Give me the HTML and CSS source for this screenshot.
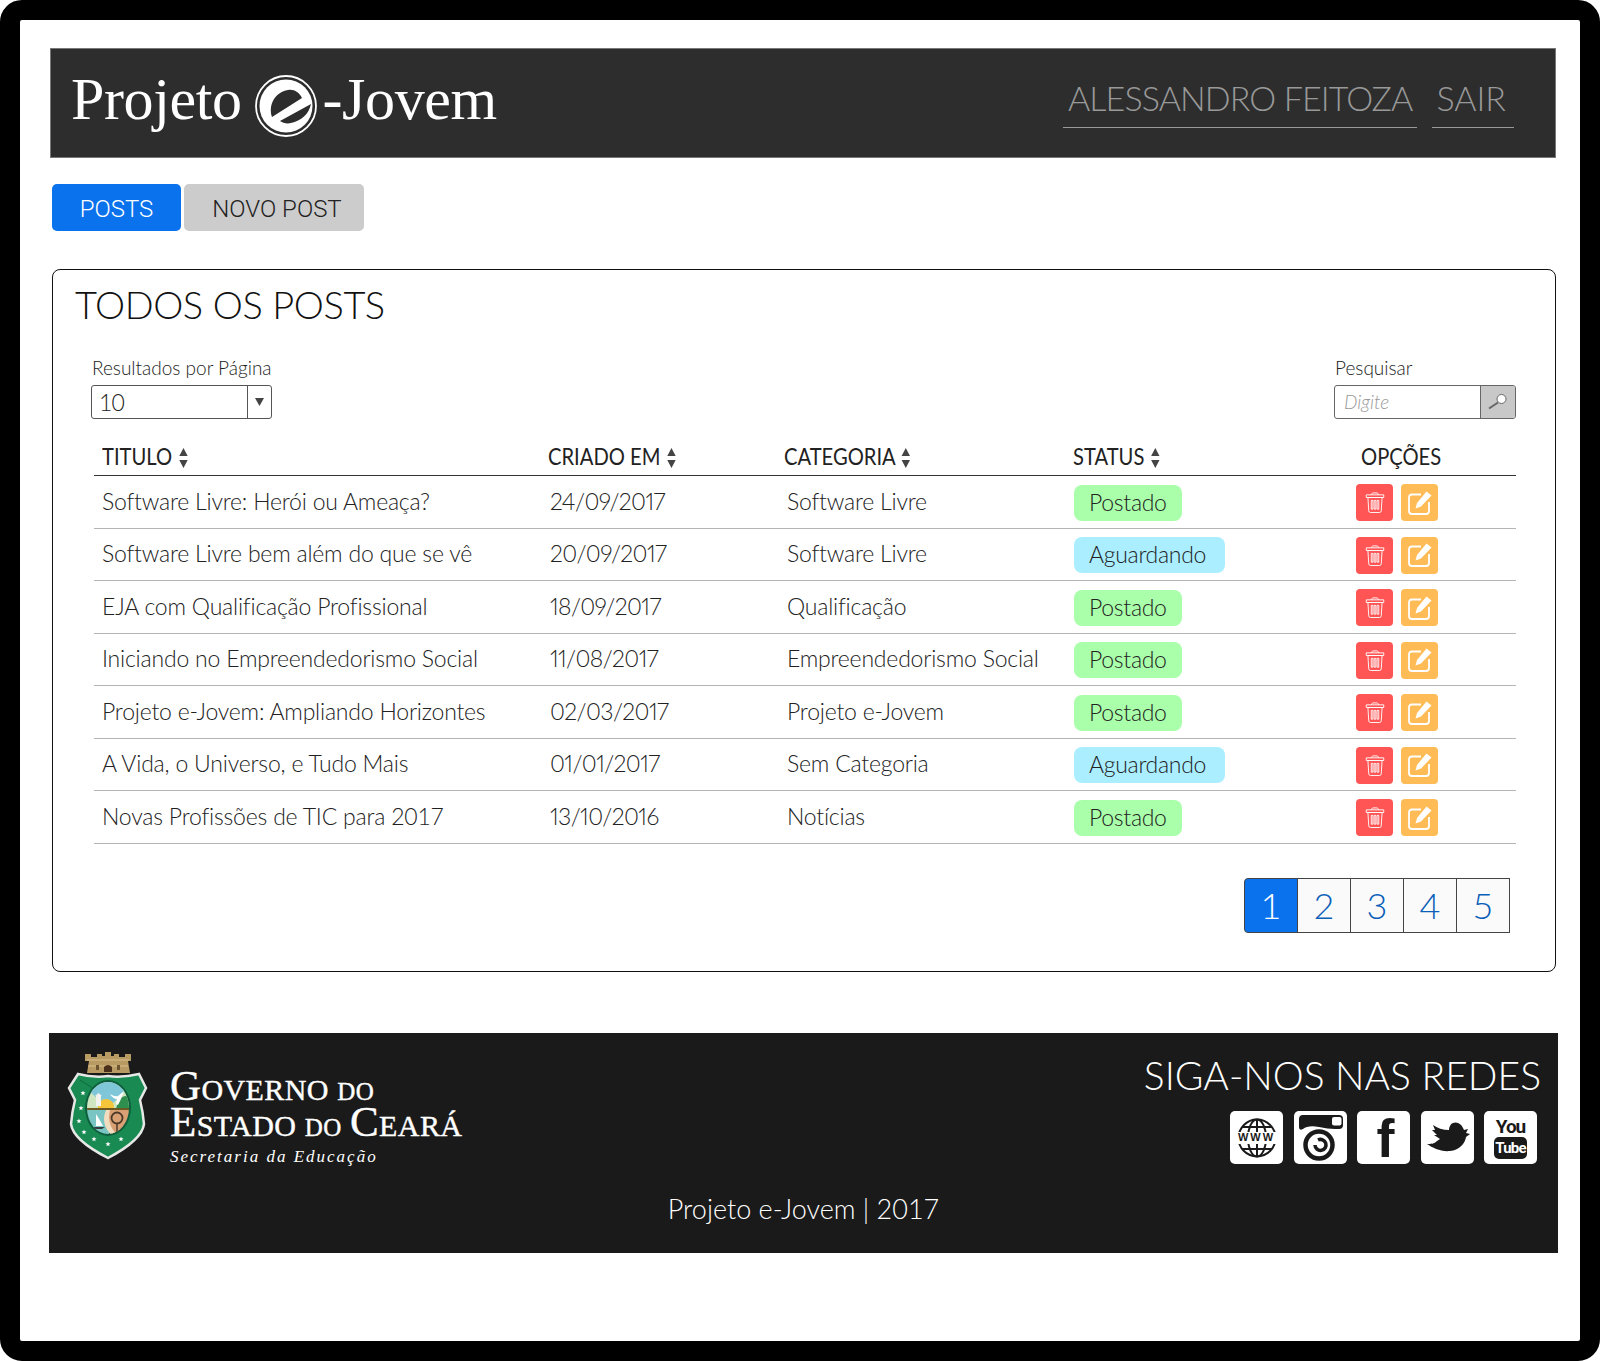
FILE: index.html
```html
<!DOCTYPE html>
<html lang="pt-BR">
<head>
<meta charset="utf-8">
<title>Projeto e-Jovem</title>
<link rel="stylesheet" href="styles.css">
</head>
<body>
<svg class="defs" width="0" height="0" aria-hidden="true">
  <defs>
    <symbol id="sort" viewBox="0 0 10 20"><path d="M5 0 10 8H0ZM5 20 0 12H10Z"/></symbol>
    <symbol id="trash" viewBox="0 0 24 26"><g fill="none" stroke="#fff" stroke-width="1.1"><path d="M7.500 3.800 8.500 2.200Q8.800 1.500 9.500 1.500h5Q15.200 1.500 15.500 2.200L16.500 3.800"/><path d="M1.500 3.800H22.500V7H1.500Z"/><path d="M3.500 7 4.500 23Q4.700 25 6.500 25H17.500Q19.300 25 19.500 23L20.500 7Z"/><path d="M7.500 10.500h2v10.500h-2zM11 10.500h2v10.500h-2zM14.500 10.500h2v10.500h-2z"/></g></symbol>
    <symbol id="edit" viewBox="0 0 24 24"><path d="M13 3.500H4Q1 3.500 1 6.500V20Q1 23 4 23H18Q21 23 21 20V11" fill="none" stroke="#fff" stroke-width="1.800"/><path d="M18.500 .5 23.500 4.500 13 15.500 7.500 17.500 9 12Z" fill="#fff"/></symbol>
    <polygon id="star" points="0,-2.600 .7,-.8 2.600,-.8 1.100,.4 1.600,2.300 0,1.200 -1.600,2.300 -1.100,.4 -2.600,-.8 -.7,-.8" fill="#fff"/>
  </defs>
</svg>
<div class="frame">
  <header class="topbar">
    <div class="logo">
      <span>Projeto</span>
      <svg class="logo-mark" viewBox="0 0 62 62" aria-hidden="true">
        <circle cx="31" cy="31" r="30" fill="none" stroke="#fff" stroke-width="1.800"/>
        <circle cx="31" cy="31" r="26.500" fill="#fff"/>
        <path d="M17 42C13 30 20 17 33 15C39 14 44 17 47 23Z" fill="#2d2d2d"/>
        <path d="M25 46 56 29C54 39 46 46 36 48C32 49 28 48 25 46Z" fill="#2d2d2d"/>
      </svg>
      <span>-Jovem</span>
    </div>
    <nav class="usernav">
      <a class="usernav-name">ALESSANDRO FEITOZA</a>
      <a class="usernav-exit">SAIR</a>
    </nav>
  </header>

  <div class="tabs">
    <a class="tab tab-active">POSTS</a>
    <a class="tab tab-new">NOVO POST</a>
  </div>

  <main class="panel">
    <h1 class="panel-title">TODOS OS POSTS</h1>
    <div class="controls">
      <div class="control">
        <div class="control-label">Resultados por Página</div>
        <div class="select">
          <span class="select-value">10</span>
          <span class="select-arrow"><svg width="9" height="8" viewBox="0 0 9 8"><path d="M0 0H9L4.500 8Z" fill="#444"/></svg></span>
        </div>
      </div>
      <div class="control">
        <div class="control-label">Pesquisar</div>
        <div class="search">
          <span class="search-input">Digite</span>
          <span class="search-btn">
            <svg width="20" height="16" viewBox="0 0 20 16"><path d="M1 14.500 10 8.500" stroke="#666" stroke-width="2"/><circle cx="13.500" cy="5" r="4.500" fill="#fff" stroke="#666" stroke-width="1"/></svg>
          </span>
        </div>
      </div>
    </div>

    <div class="table">
      <div class="row row-head">
        <div class="th">TITULO <svg class="sort"><use href="#sort"/></svg></div>
        <div class="th">CRIADO EM <svg class="sort"><use href="#sort"/></svg></div>
        <div class="th">CATEGORIA <svg class="sort"><use href="#sort"/></svg></div>
        <div class="th">STATUS <svg class="sort"><use href="#sort"/></svg></div>
        <div class="th th-options">OPÇÕES</div>
      </div>
      <div class="row">
        <div class="td">Software Livre: Herói ou Ameaça?</div><div class="td td-date">24/09/2017</div><div class="td td-cat">Software Livre</div>
        <div class="td td-status"><span class="pill pill-ok">Postado</span></div>
        <div class="td td-actions"><a class="act act-del"><svg class="ico-del"><use href="#trash"/></svg></a><a class="act act-edit"><svg class="ico-edit"><use href="#edit"/></svg></a></div>
      </div>
      <div class="row">
        <div class="td">Software Livre bem além do que se vê</div><div class="td td-date">20/09/2017</div><div class="td td-cat">Software Livre</div>
        <div class="td td-status"><span class="pill pill-wait">Aguardando</span></div>
        <div class="td td-actions"><a class="act act-del"><svg class="ico-del"><use href="#trash"/></svg></a><a class="act act-edit"><svg class="ico-edit"><use href="#edit"/></svg></a></div>
      </div>
      <div class="row">
        <div class="td">EJA com Qualificação Profissional</div><div class="td td-date">18/09/2017</div><div class="td td-cat">Qualificação</div>
        <div class="td td-status"><span class="pill pill-ok">Postado</span></div>
        <div class="td td-actions"><a class="act act-del"><svg class="ico-del"><use href="#trash"/></svg></a><a class="act act-edit"><svg class="ico-edit"><use href="#edit"/></svg></a></div>
      </div>
      <div class="row">
        <div class="td">Iniciando no Empreendedorismo Social</div><div class="td td-date">11/08/2017</div><div class="td td-cat">Empreendedorismo Social</div>
        <div class="td td-status"><span class="pill pill-ok">Postado</span></div>
        <div class="td td-actions"><a class="act act-del"><svg class="ico-del"><use href="#trash"/></svg></a><a class="act act-edit"><svg class="ico-edit"><use href="#edit"/></svg></a></div>
      </div>
      <div class="row">
        <div class="td">Projeto e-Jovem: Ampliando Horizontes</div><div class="td td-date">02/03/2017</div><div class="td td-cat">Projeto e-Jovem</div>
        <div class="td td-status"><span class="pill pill-ok">Postado</span></div>
        <div class="td td-actions"><a class="act act-del"><svg class="ico-del"><use href="#trash"/></svg></a><a class="act act-edit"><svg class="ico-edit"><use href="#edit"/></svg></a></div>
      </div>
      <div class="row">
        <div class="td">A Vida, o Universo, e Tudo Mais</div><div class="td td-date">01/01/2017</div><div class="td td-cat">Sem Categoria</div>
        <div class="td td-status"><span class="pill pill-wait">Aguardando</span></div>
        <div class="td td-actions"><a class="act act-del"><svg class="ico-del"><use href="#trash"/></svg></a><a class="act act-edit"><svg class="ico-edit"><use href="#edit"/></svg></a></div>
      </div>
      <div class="row">
        <div class="td">Novas Profissões de TIC para 2017</div><div class="td td-date">13/10/2016</div><div class="td td-cat">Notícias</div>
        <div class="td td-status"><span class="pill pill-ok">Postado</span></div>
        <div class="td td-actions"><a class="act act-del"><svg class="ico-del"><use href="#trash"/></svg></a><a class="act act-edit"><svg class="ico-edit"><use href="#edit"/></svg></a></div>
      </div>
    </div>

    <div class="pager">
      <a class="page page-active">1</a><a class="page">2</a><a class="page">3</a><a class="page">4</a><a class="page">5</a>
    </div>
  </main>

  <footer class="footer">
    <div class="footer-top">
      <div class="brand">
        <svg class="arms" viewBox="0 0 120 130" aria-hidden="true">
          <path d="M35 14h6v3h6v-3h5v2h3v-4h6v4h3v-2h5v3h6v-3h6v7h-3l2 12H37l2-12h-4Z" fill="#b89a63"/>
          <path d="M37 20h42M38 26h40" stroke="#d8c08c" stroke-width="1"/>
          <path d="M54 32v-5q4-4 8 0v5Z" fill="#4a2f1c"/>
          <path d="M46 30v-5h3v5ZM67 30v-5h3v5Z" fill="#6e5330"/>
          <path d="M28 34Q44 38 58 36Q72 38 89 34L96 48L90 60Q93 72 94 84Q92 100 58 118Q23 100 21 84Q22 72 25 60L19 48Z" fill="#188a52" stroke="#e6e8e6" stroke-width="2.500"/>
          <path d="M30 40 44 49" stroke="#0e6a3c" stroke-width="1"/>
          <ellipse cx="58" cy="68" rx="23" ry="28" fill="#0f5f3c"/>
          <clipPath id="oval"><ellipse cx="58" cy="68" rx="21" ry="26"/></clipPath>
          <g clip-path="url(#oval)">
            <rect x="35" y="40" width="46" height="30" fill="#cfe6c0"/>
            <path d="M58 68 38 50 42 44 50 42 60 40 72 44 76 50Z" fill="#7fc7d8"/>
            <circle cx="56" cy="67" r="8" fill="#f5c63a"/>
            <path d="M66 70q2-14 10-14l6 2v12Z" fill="#2f8f4e"/>
            <rect x="35" y="68" width="46" height="2" fill="#6c5a22"/>
            <rect x="35" y="70" width="24" height="26" fill="#79c5c4"/>
            <path d="M58 70H82V96H64Q52 84 58 70Z" fill="#d9a074"/>
            <path d="M56 70Q50 84 62 96H68Q56 84 60 70Z" fill="#f2dcc0"/>
            <path d="M46 74v12h7Q50 80 46 74Z" fill="#fff"/>
            <path d="M43 87h12l-3 2h-7Z" fill="#3b3b3b"/>
            <circle cx="67" cy="78" r="5.500" fill="none" stroke="#4c3a28" stroke-width="1.800"/>
            <path d="M67 83v9" stroke="#4c3a28" stroke-width="1.500"/>
          </g>
          <path d="M46 66V56h5v10Zm-1 -10 3.500-3 3.500 3Z" fill="#f2f2ee"/>
          <path d="M60 54q5 3 8 2l6-5-3 8-3 6-2-1 1-5q-4 0-7-5Z" fill="#fff"/>
          <use href="#star" x="33" y="53"/><use href="#star" x="31" y="68"/><use href="#star" x="29" y="81"/><use href="#star" x="34" y="92"/><use href="#star" x="44" y="99"/><use href="#star" x="58" y="104"/><use href="#star" x="71" y="99"/>
        </svg>
        <div class="brand-text">
          <div class="brand-line"><span class="b-cap">G</span><span class="b-mid">OVERNO</span> <span class="b-low">DO</span></div>
          <div class="brand-line"><span class="b-cap">E</span><span class="b-mid">STADO</span> <span class="b-low">DO</span> <span class="b-cap">C</span><span class="b-mid">EARÁ</span></div>
          <div class="brand-sub">Secretaria da Educação</div>
        </div>
      </div>
      <div class="social">
        <h2 class="social-title">SIGA-NOS NAS REDES</h2>
        <div class="social-icons">
          <a class="sicon sicon-www">
            <svg class="www-globe" viewBox="0 0 40 40" aria-hidden="true">
              <g fill="none" stroke="#1a1a1a" stroke-width="2">
                <circle cx="20" cy="20" r="18.500"/>
                <ellipse cx="20" cy="20" rx="9" ry="18.500"/>
                <path d="M20 1.500V38.500M5 9H35M5 31H35"/>
              </g>
              <rect x="0" y="14" width="40" height="12" fill="#fff"/>
            </svg>
            <span class="www-text">WWW</span>
          </a>
          <a class="sicon">
            <svg class="fill-icon" viewBox="0 0 53 53" aria-hidden="true">
              <path d="M5 8Q5 4 9 4H45Q49 4 49 8V14Q49 18 45 18H41Q34 18 25 16Q14 14 9 18Q5 20 5 16Z" fill="#1a1a1a"/>
              <rect x="38" y="6" width="9.500" height="8.500" rx="2" fill="#fff"/>
              <circle cx="25" cy="34" r="13.500" fill="none" stroke="#1a1a1a" stroke-width="4.500"/>
              <path d="M21 34a5.500 5.500 0 1 0 3-5" fill="none" stroke="#1a1a1a" stroke-width="3.500"/>
            </svg>
          </a>
          <a class="sicon sicon-f"><span class="f-glyph">f</span></a>
          <a class="sicon">
            <svg class="fill-icon" viewBox="0 0 53 53" aria-hidden="true"><path fill="#1a1a1a" d="M6 33C12 37 20 41 29 40C38 39 44 33 45 26L49 23L45 22L47 18L43 19C41 13 36 10 32 12C29 13 28 17 28 19C22 19 16 17 12 14L14 19L11 19L16 24L13 24L19 28L16 30C13 33 10 33 6 33Z"/></svg>
          </a>
          <a class="sicon sicon-yt"><span class="yt-you">You</span><span class="yt-tube">Tube</span></a>
        </div>
      </div>
    </div>
    <div class="copyright">Projeto e-Jovem | 2017</div>
  </footer>
</div>
</body>
</html>
```

FILE: styles.css
```css
* { box-sizing: border-box; }
html, body { margin: 0; padding: 0; background: #fff; }
body { font-family: "Lato", "Liberation Sans", sans-serif; font-weight: 300; color: #222; }
.defs { position: absolute; }
a { color: inherit; text-decoration: none; }

.frame {
  width: 1600px; height: 1361px;
  border: 20px solid #000; border-radius: 22px;
  padding: 28px 24px 0 30px;
  background: #fff;
  overflow: hidden;
}

/* top bar */
.topbar {
  height: 110px;
  background: #2d2d2d;
  border: 1px solid #777;
  display: flex; justify-content: space-between; align-items: flex-start;
  padding: 0 41px 0 20px;
}
.logo {
  display: flex; align-items: center; gap: 0;
  font-family: "Liberation Serif", serif; font-weight: 400;
  font-size: 60px; color: #fff; height: 100px;
  letter-spacing: -.4px;
}
.logo-mark { width: 62px; height: 62px; margin: 14px 6px 0 13px; flex: none; }
.usernav { display: flex; gap: 15px; margin-top: 25px; color: #999; font-size: 34px; }
.usernav a { display: block; height: 54px; line-height: 48px; border-bottom: 1px solid #999; padding: 0 5px; }
.usernav .usernav-name { letter-spacing: -.9px; }
.usernav .usernav-exit { padding: 0 8px 0 4px; }

/* tabs */
.tabs { display: flex; gap: 3px; margin: 26px 0 0 2px; }
.tab {
  height: 47px; width: 180px; padding-top: 3px;
  background: #ccc; color: #222; border-radius: 5px;
  display: flex; align-items: center; justify-content: center;
  font-family: "Roboto", sans-serif; font-size: 24px; font-weight: 300;
}
.tab-new { padding-left: 6px; }
.tab-active { width: 129px; background: #0a72ec; color: #fff; }

/* panel */
.panel {
  height: 703px; margin: 38px 0 0 2px;
  border: 1px solid #111; border-radius: 8px;
  padding: 0 39px 0 41px;
}
.panel-title {
  margin: 0 0 0 -19px; height: 72px;
  font-size: 38px; font-weight: 300; line-height: 68px; color: #111; letter-spacing: -.4px;
}
.controls { display: flex; justify-content: space-between; height: 94px; padding-top: 13px; }
.control-label { font-size: 19px; line-height: 26px; height: 30px; color: #222; font-weight: 300; margin-left: -2px; }
.control:last-child .control-label { margin-left: 1px; }
.select {
  display: flex; width: 181px; height: 34px; margin-left: -3px;
  border: 1px solid #555; border-radius: 3px; background: #fff;
}
.select-value { flex: 1; border-right: 1px solid #555; padding-left: 7px; font-size: 23px; line-height: 32px; color: #222; font-weight: 300; letter-spacing: -.8px; }
.select-arrow { width: 23px; display: flex; align-items: center; justify-content: center; }
.search {
  display: flex; width: 182px; height: 34px;
  border: 1px solid #666; border-radius: 3px; overflow: hidden;
}
.search-input { flex: 1; padding-left: 9px; font-size: 19px; line-height: 32px; font-style: italic; color: #999; }
.search-btn { width: 35px; background: #c8c8c8; border-left: 1px solid #666; display: flex; align-items: center; justify-content: center; }

/* table */
.table { display: block; }
.row {
  display: grid;
  grid-template-columns: 446px 236px 289px 275px 176px;
  height: 52.5px; align-items: center;
  border-bottom: 1px solid #b5b5b5;
}
.row-head { height: 40px; border-bottom: 1.5px solid #333; align-items: center; }
.th {
  padding-left: 8px; font-size: 24px; font-weight: 400; color: #222; white-space: nowrap;
  transform: scaleX(.84); transform-origin: 8px 50%;
}
.th-options { padding-left: 21px; transform-origin: 21px 50%; }
.sort { width: 12px; height: 20px; vertical-align: -3px; fill: #444; margin-left: 1px; }
.td { padding-left: 8px; font-size: 23px; letter-spacing: -.2px; color: #222; white-space: nowrap; margin-top: -2px; }
.td-date { padding-left: 10px; letter-spacing: -.6px; font-variant-numeric: proportional-nums; }
.td-cat { padding-left: 11px; }
.td-status { padding-left: 9px; display: flex; margin-top: 2px; }
.pill { height: 36px; line-height: 34px; padding: 0 15px; border-radius: 8px; color: #222; font-size: 23px; letter-spacing: -.3px; }
.pill-ok { background: #aaffaa; }
.pill-wait { background: #aaeeff; width: 151px; }
.td-actions { display: flex; gap: 8px; padding-left: 16px; margin-top: 2px; }
.act { width: 37px; height: 37px; border-radius: 4px; display: flex; align-items: center; justify-content: center; }
.act-del { background: #ff5555; }
.act-edit { background: #ffbb55; }
.ico-del { width: 20px; height: 23px; }
.ico-edit { width: 24px; height: 24px; }

/* pager */
.pager { display: flex; justify-content: flex-end; margin: 34px 6px 0 0; }
.page {
  width: 54px; height: 55px; margin-left: -1px;
  display: flex; align-items: center; justify-content: center;
  background: #fafafa; border: 1px solid #444; color: #0a5fb8;
  font-size: 36px; font-weight: 300;
}
.page-active { background: #0a72ec; color: #fff; border-radius: 4px 0 0 4px; }

/* footer */
.footer {
  height: 220px; margin: 61px -2px 0 -1px;
  background: #1a1a1a; color: #fff;
}
.footer-top { display: flex; justify-content: space-between; height: 152px; padding-right: 17px; }
.brand { display: flex; align-items: flex-start; }
.arms { width: 120px; height: 130px; margin: 7px 0 0 1px; flex: none; }
.brand-text { margin-left: 0; padding-top: 32px; font-family: "Liberation Serif", serif; color: #fff; }
.brand-line { height: 36px; line-height: 42px; white-space: nowrap; font-weight: 400; -webkit-text-stroke: .4px #fff; letter-spacing: .4px; word-spacing: 4px; }
.b-cap { font-size: 43px; }
.b-mid { font-size: 30px; }
.b-low { font-size: 25px; }
.brand-sub { margin-top: 8px; font-size: 17px; font-style: italic; letter-spacing: 2px; line-height: 24px; font-weight: 400; }
.social { display: flex; flex-direction: column; align-items: flex-end; }
.social-title { margin: 17px 0 0; font-size: 39px; font-weight: 300; line-height: 50px; white-space: nowrap; }
.social-icons { display: flex; gap: 10.500px; margin: 11px 4px 0 0; }
.sicon {
  position: relative;
  width: 53px; height: 53px; background: #fff; border-radius: 5px;
  display: flex; align-items: center; justify-content: center; color: #1a1a1a;
}
.www-globe { width: 40px; height: 40px; }
.www-text {
  position: absolute; left: 0; right: 0; top: 19px; text-align: center;
  font: 700 11px/14px "Liberation Sans", sans-serif; letter-spacing: 2px;
}
.fill-icon { width: 53px; height: 53px; }
.f-glyph { font: 700 54px/50px "Liberation Sans", sans-serif; transform: translate(2px, 0); }
.sicon-yt { flex-direction: column; gap: 1px; }
.yt-you { font: 700 19px/19px "Roboto", sans-serif; letter-spacing: -1px; }
.yt-tube {
  background: #1a1a1a; color: #fff; border-radius: 5px;
  width: 33px; height: 22px; text-align: center;
  font: 700 15px/22px "Roboto", sans-serif; letter-spacing: -.8px;
}
.copyright { text-align: center; font-size: 27px; line-height: 46px; color: #fff; padding-top: 1px; font-weight: 300; }
```
